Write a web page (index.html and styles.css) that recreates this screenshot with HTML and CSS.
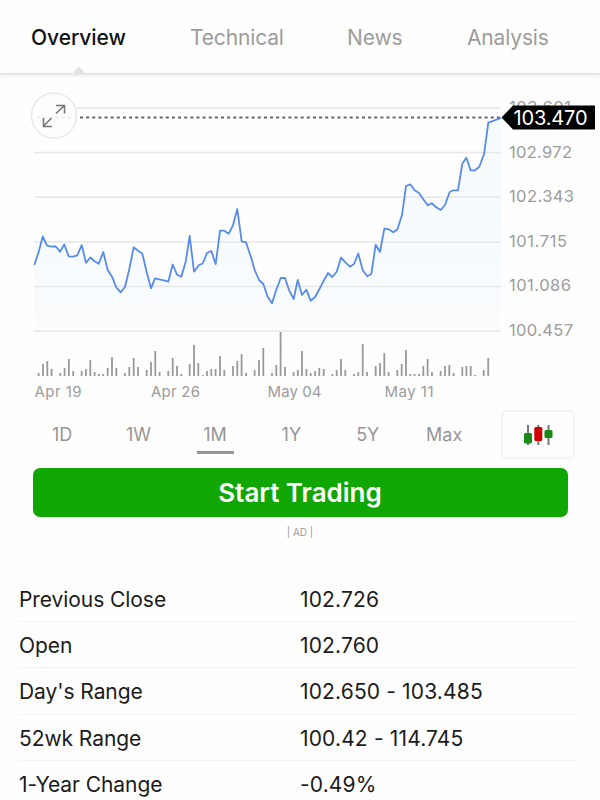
FILE: index.html
```html
<!DOCTYPE html>
<html lang="en">
  <head>
    <meta charset="UTF-8" />
    <meta name="viewport" content="width=device-width, initial-scale=1.0" />
    <title>Overview</title>
    <link rel="stylesheet" href="styles.css">
  </head>
  <body>
    <nav class="tabs">
      <a class="tab tab-overview active">Overview</a>
      <a class="tab tab-technical">Technical</a>
      <a class="tab tab-news">News</a>
      <a class="tab">Analysis</a>
      <svg class="notch" width="16" height="8" viewBox="0 0 16 8">
        <path d="M0 8C3 8 6 1 8 1s5 7 8 7z" />
      </svg>
    </nav>

    <svg class="chart" width="600" height="334" viewBox="0 74 600 334">
      <defs>
        <linearGradient id="areaFill" gradientUnits="userSpaceOnUse" x1="0" y1="118" x2="0" y2="358">
          <stop offset="0" stop-color="#f6fbff" />
          <stop offset="0.8" stop-color="#f9fbfd" />
          <stop offset="1" stop-color="#fefefe" />
        </linearGradient>
      </defs>

      <path class="area" d="M34.3 265 38.7 251.7 42.7 236.5 47 245.5 51.2 246.7 55.7 246.3 60 251.7 64.3 244.5 68.7 256.3 72.7 256.7 77.3 255.3 81.7 245 86 262.7 90.3 257.5 94.3 261 98.7 263.7 103.3 252 107.7 270 112 276.7 116.3 287.5 120.7 292.3 125 287 129.3 269 133.7 247.3 138 250.7 142.3 253.5 146.7 272.3 151 288.3 155 278.3 159.3 279.3 164 280.3 168.3 281.7 172.7 264.5 177 274.7 181.3 276.7 185.7 261.7 189.7 236 194 271.7 198.7 265.3 202.7 263.5 207 253 211.3 251 215.7 264 220 230.7 224.3 230.7 228.7 233.7 233 225.3 237.3 209 241.7 241.3 246 242.3 250.7 256.3 254.7 270 259 280 263.3 284 267.7 296.7 272 303.3 276.3 289.7 280.7 278 285 278 289.3 290.7 293.7 299 297.7 280 302 295 306.3 289.7 310.7 300.7 315.3 296.7 319.3 289.3 323.7 280.7 328 273 332.3 277 336.7 271.7 341 257.7 345.3 262.3 350 266.7 354 264 358.3 253.5 362.7 270.3 367.3 276.3 371.3 274 375.7 244.7 380 252 384.3 228.7 388.7 229.3 393.3 232.3 397.3 229.5 402 215 406 186 410.3 184.3 414.7 190.3 419 193 423.3 199.3 427.7 205.3 431.7 203.3 436 207 440.7 210 445 205 449.7 192 453.3 190.3 458 190.3 462.3 163.7 466.3 157.7 470.7 170.3 475 170.3 479.3 166.7 484 154.3 488.3 122.7 501 118V358H34.3z" />
      <path class="grid" d="M34 108H501M34 152.5H501M34 197.2H501M34 242H501M34 286.5H501M34 331H501" />
      <path class="volume" d="M38.7 376v-3M43 376v-12M47.3 376v-15M51.6 376v-7M60.3 376v-3M64.6 376v-8M68.9 376v-17M73.2 376v-5M81.7 376v-5M86 376v-7M90.3 376v-16M94.6 376v-4M99 376v-2M103.3 376v-2M107.7 376v-8M112 376v-19M116.3 376v-8M125 376v-3M129.3 376v-9M133.7 376v-18M138 376v-9M146.7 376v-6M151 376v-14M155.3 376v-25M159.6 376v-4M168.3 376v-5M172.7 376v-18M177 376v-10M181.3 376v-2M189.7 376v-12M194 376v-31M198.3 376v-13M202.7 376v-1M207 376v-5M211.3 376v-7M215.6 376v-7M220 376v-20M224.3 376v-6M233 376v-10M237.3 376v-15M241.6 376v-22M246 376v-3M254.6 376v-6M259 376v-16M263.3 376v-28M272 376v-3M276.3 376v-11M280.6 376v-44M285 376v-9M293.6 376v-4M297.8 376v-6M302 376v-25M306.4 376v-7M310.7 376v-3M315 376v-5M319.3 376v-8M323.7 376v-7M332.3 376v-2M336.7 376v-6M341 376v-17M345.3 376v-6M354 376v-2M358.3 376v-4M362.7 376v-32M367 376v-4M375.7 376v-10M380 376v-13M384.3 376v-23M388.6 376v-4M397.3 376v-6M401.7 376v-12M406 376v-26M410.3 376v-2M414.6 376v-2M419 376v-2M423.3 376v-10M427.6 376v-17M432 376v-4M440.6 376v-5M445 376v-10M449.3 376v-11M453.6 376v-3M462.3 376v-9M466.4 376v-10M470.7 376v-10M475 376v-1M483.7 376v-6M488.2 376v-18" />
      <path class="last-price" d="M80 117.5H501" />
      <path class="line" d="M34.3 265 38.7 251.7 42.7 236.5 47 245.5 51.2 246.7 55.7 246.3 60 251.7 64.3 244.5 68.7 256.3 72.7 256.7 77.3 255.3 81.7 245 86 262.7 90.3 257.5 94.3 261 98.7 263.7 103.3 252 107.7 270 112 276.7 116.3 287.5 120.7 292.3 125 287 129.3 269 133.7 247.3 138 250.7 142.3 253.5 146.7 272.3 151 288.3 155 278.3 159.3 279.3 164 280.3 168.3 281.7 172.7 264.5 177 274.7 181.3 276.7 185.7 261.7 189.7 236 194 271.7 198.7 265.3 202.7 263.5 207 253 211.3 251 215.7 264 220 230.7 224.3 230.7 228.7 233.7 233 225.3 237.3 209 241.7 241.3 246 242.3 250.7 256.3 254.7 270 259 280 263.3 284 267.7 296.7 272 303.3 276.3 289.7 280.7 278 285 278 289.3 290.7 293.7 299 297.7 280 302 295 306.3 289.7 310.7 300.7 315.3 296.7 319.3 289.3 323.7 280.7 328 273 332.3 277 336.7 271.7 341 257.7 345.3 262.3 350 266.7 354 264 358.3 253.5 362.7 270.3 367.3 276.3 371.3 274 375.7 244.7 380 252 384.3 228.7 388.7 229.3 393.3 232.3 397.3 229.5 402 215 406 186 410.3 184.3 414.7 190.3 419 193 423.3 199.3 427.7 205.3 431.7 203.3 436 207 440.7 210 445 205 449.7 192 453.3 190.3 458 190.3 462.3 163.7 466.3 157.7 470.7 170.3 475 170.3 479.3 166.7 484 154.3 488.3 122.7 501 118" />

      <g class="axis">
        <text x="509" y="112.5" textLength="62">103.601</text>
        <text x="509" y="157.5" textLength="63">102.972</text>
        <text x="509" y="202" textLength="65">102.343</text>
        <text x="509" y="246.5" textLength="58">101.715</text>
        <text x="509" y="291" textLength="62">101.086</text>
        <text x="509" y="335.5" textLength="64">100.457</text>
      </g>
      <g class="axis dates">
        <text x="34.5" y="397" textLength="47">Apr 19</text>
        <text x="151" y="397" textLength="49">Apr 26</text>
        <text x="267.5" y="397" textLength="54">May 04</text>
        <text x="384.5" y="397" textLength="49">May 11</text>
      </g>

      <!-- current price label -->
      <path d="M501.5 117.5 513 105.5H595V129.5H513z" />
      <text class="price" x="513.5" y="125" textLength="74">103.470</text>

      <!-- expand button -->
      <circle class="expand" cx="54" cy="115.5" r="22.5" />
      <path class="expand-dots" d="M37 117.5H75" />
      <path class="arrows" d="M56 113.5 64.3 105.5M56 105.5H64.5V113.5M51.5 118 43.7 126M43.5 118V126.5H52" />
    </svg>

    <div class="ranges">
      <span class="range">1D</span>
      <span class="range">1W</span>
      <span class="range selected">1M</span>
      <span class="range">1Y</span>
      <span class="range">5Y</span>
      <span class="range">Max</span>
      <button class="candles" aria-label="Candlestick chart">
        <svg width="30" height="22" viewBox="0 0 30 22">
          <path class="wick" d="M5 1V21M15.3 1V21M25.5 1V21" />
          <rect class="up" x="1" y="9" width="8" height="10.5" rx="1.5" />
          <rect class="down" x="11.3" y="3" width="8" height="14" rx="1.5" />
          <rect class="up" x="21.5" y="6" width="8" height="8" rx="1.5" />
        </svg>
      </button>
    </div>

    <button class="trade">Start Trading</button>
    <div class="ad">| AD |</div>

    <dl class="stats">
      <div class="row"><dt>Previous Close</dt><dd>102.726</dd></div>
      <div class="row"><dt>Open</dt><dd>102.760</dd></div>
      <div class="row"><dt>Day's Range</dt><dd>102.650 - 103.485</dd></div>
      <div class="row"><dt>52wk Range</dt><dd>100.42 - 114.745</dd></div>
      <div class="row"><dt>1-Year Change</dt><dd>-0.49%</dd></div>
    </dl>
  </body>
</html>
```
FILE: styles.css
```css
html,
body {
  height: 100%;
  margin: 0;
  overflow: hidden;
  background-color: #fefefe;
  font-family: Inter, "Liberation Sans", sans-serif;
}

.tabs {
  position: relative;
  display: flex;
  box-sizing: border-box;
  height: 74px;
  padding: 24px 0 0 31px;
  background-color: #fefefe;
  border-bottom: 1px solid #e2e2e2;
  box-shadow: 0 1px 4px rgba(0, 0, 0, 0.13);
}

.tab {
  font-size: 21px;
  line-height: 28px;
  color: #9c9c9c;
  letter-spacing: -0.15px;
  white-space: nowrap;
}

.tab.active {
  color: #111;
  font-weight: 500;
  letter-spacing: -0.05px;
}

.tab-overview {
  width: 159px;
}

.tab-technical {
  width: 157px;
}

.tab-news {
  width: 120px;
}

.notch {
  position: absolute;
  left: 71px;
  bottom: -1px;
  fill: #e2e2e2;
}

.chart {
  display: block;
}

.area {
  fill: url(#areaFill);
}

.grid {
  fill: none;
  stroke: #e5e6e8;
  stroke-width: 1.4;
}

.volume {
  stroke: #999;
  stroke-width: 1.8;
}

.last-price {
  stroke: #666;
  stroke-width: 1.8;
  stroke-dasharray: 3 3.13;
}

.line {
  fill: none;
  stroke: #568bea;
  stroke-width: 1.8;
  stroke-linejoin: round;
}

.axis {
  font-size: 16.5px;
  fill: #9c9c9c;
}

.dates {
  font-size: 15px;
}

.price {
  font-size: 20px;
  fill: #fff;
}

.expand {
  fill: #fefefe;
  stroke: #e9e9e9;
  stroke-width: 1.5;
}

.expand-dots {
  stroke: #e9e9e9;
  stroke-width: 1.6;
  stroke-dasharray: 3 3.13;
}

.arrows {
  fill: none;
  stroke: #777;
  stroke-width: 1.6;
}

.ranges {
  display: flex;
  align-items: center;
  box-sizing: border-box;
  height: 53px;
  padding-left: 24px;
}

.range {
  width: 76.4px;
  box-sizing: border-box;
  font-size: 18px;
  line-height: 34px;
  color: #969696;
  text-align: center;
}

.selected {
  position: relative;
}

.selected::after {
  content: "";
  position: absolute;
  left: 20px;
  bottom: -2px;
  width: 37px;
  height: 3px;
  background-color: #969696;
}

.candles {
  display: flex;
  align-items: center;
  justify-content: center;
  box-sizing: border-box;
  width: 74px;
  height: 49px;
  margin-left: 19px;
  padding: 0;
  background-color: #fefefe;
  border: 2px solid #f3f3f3;
  border-radius: 5px;
}

.wick {
  stroke: #777;
  stroke-width: 2;
}

.up {
  fill: #168a16;
}

.down {
  fill: #d00000;
}

.trade {
  display: block;
  width: 535px;
  height: 49px;
  margin: 7px 0 0 32.5px;
  padding: 0 0 1px;
  border: none;
  border-radius: 7px;
  background-color: #10a604;
  color: #fff;
  font-family: inherit;
  font-size: 26px;
  font-weight: 600;
}

.ad {
  margin-top: 8px;
  font-size: 10px;
  line-height: 14px;
  color: #999;
  text-align: center;
}

.stats {
  margin: 37px 20px 0 19px;
}

.row {
  display: flex;
  box-sizing: border-box;
  height: 46.2px;
  border-bottom: 1px solid #f4f4f4;
  font-size: 21px;
  line-height: 47px;
  color: #1b1b1b;
}

.row dt {
  width: 281px;
  letter-spacing: -0.07px;
}

.row dd {
  margin: 0;
  letter-spacing: 0.15px;
}
```
